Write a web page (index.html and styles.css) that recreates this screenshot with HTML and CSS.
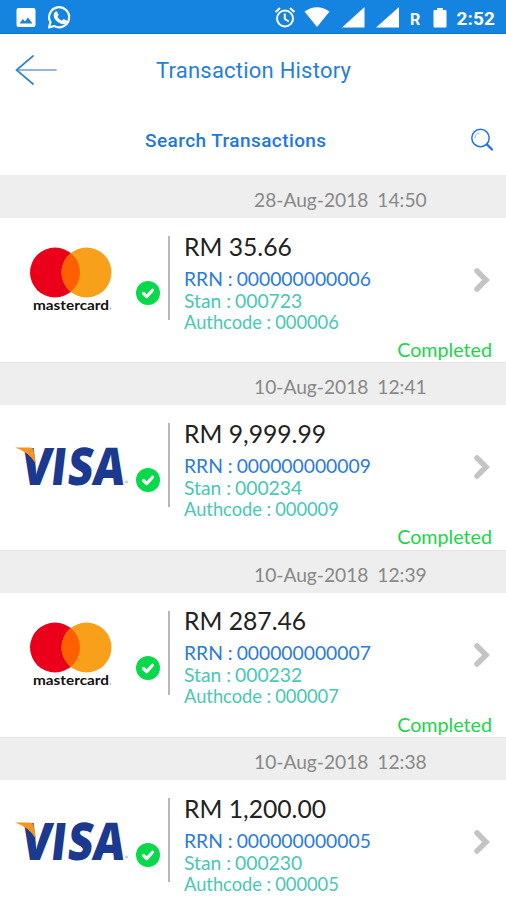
FILE: index.html
```
<!DOCTYPE html>
<html lang="en">
<head>
<meta charset="utf-8">
<title>Transaction History</title>
<link rel="stylesheet" href="styles.css">
</head>
<body>
<svg class="defs" width="0" height="0">
  <symbol id="circles" viewBox="0 0 130 80">
    <circle cx="55" cy="30.500" r="25" fill="#eb001b"/>
    <circle cx="86.500" cy="30.500" r="25" fill="#f9a01b"/>
    <path d="M70.750 11.100a25 25 0 0 1 0 38.800a25 25 0 0 1 0-38.800z" fill="#ff5f00"/>
    <circle cx="110.500" cy="66.800" r=".6" fill="#777"/>
  </symbol>
  <symbol id="flag" viewBox="0 0 130 80">
    <path d="M15 18.500H30Q33 18.500 33.600 21.500L36 35Q29 23 15 18.500z" fill="#f7941d"/>
    <circle cx="126.500" cy="53" r="1" fill="none" stroke="#8791be" stroke-width=".6"/>
  </symbol>
  <symbol id="check" viewBox="0 0 24 24">
    <circle cx="12" cy="12" r="12" fill="#08d94b"/>
    <path d="M7.500 12.500l3.200 3.100 5.800-6.400" fill="none" stroke="#fff" stroke-width="3.200" stroke-linecap="round" stroke-linejoin="round"/>
  </symbol>
  <symbol id="chevron" viewBox="0 0 18 26">
    <path d="M4 4L13 13 4 22" fill="none" stroke="#c4c4c4" stroke-width="5.500" stroke-linecap="round"/>
  </symbol>
</svg>
<header class="status">
  <svg width="506" height="34" viewBox="0 0 506 34" fill="#fff">
    <path fill-rule="evenodd" d="M18.500 8h15a2 2 0 0 1 2 2v15a2 2 0 0 1-2 2h-15a2 2 0 0 1-2-2V10a2 2 0 0 1 2-2zM19.500 23.500h13l-4.500-6-3 4-2.200-2.500z"/>
    <path d="M49 27.500l1.500-5.200a10 10 0 1 1 3.800 3.700z" fill="none" stroke="#fff" stroke-width="2.200" stroke-linejoin="round"/>
    <path d="M55.500 11.500l1.500 0 1.700 3.500-1.300 1.800q1.500 3 4.500 4l1.700-1.800 3.600 1.800q.2 3.200-3.600 3.400-4.700-.4-8-4.200-4-5-.1-8.500z"/>
    <g fill="none" stroke="#fff" stroke-width="2"><circle cx="285" cy="18.500" r="8"/><path d="M284.800 13.500v5.500l4 2.500M275.500 12l4.500-4M290 8l4.500 4"/></g>
    <path d="M304.500 11.500Q317 3 329.500 11.500L317 27z"/>
    <path d="M342 27.500L364.500 7v20.500zM376 27.500L399 7v20.500z"/>
    <path d="M434.500 10h2.500V8h6v2h2.500q1 0 1 1v15.500q0 1-1 1h-11q-1 0-1-1V11q0-1 1-1z"/>
    <text class="roam" x="410" y="25">R</text>
    <text class="clock" x="456.500" y="25.200" textLength="38.500">2:52</text>
  </svg>
</header>
<nav class="top">
  <svg class="back" width="42" height="32" viewBox="0 0 42 32" fill="none" stroke-linecap="round"><path d="M2 15H41" stroke="#6f9dd5" stroke-width="1.700"/><path d="M18 1L1.500 15 18 29" stroke="#3484c9" stroke-width="1.700"/></svg>
  <h1>Transaction History</h1>
</nav>
<div class="search">
  <span>Search Transactions</span>
  <svg width="24" height="24" viewBox="0 0 24 24" fill="none" stroke="#2474e5"><circle cx="10.500" cy="10" r="8.700" stroke-width="1.500"/><path d="M17 16.500l5 5" stroke-width="2.400" stroke-linecap="round"/><path d="M5 10q0-4.500 4.500-5" stroke="#8db8ef"/></svg>
</div>
<main>
  <section>
    <h2>28-Aug-2018 14:50</h2>
    <article>
      <svg class="brand" viewBox="0 0 130 80"><use href="#circles"/><text class="mc-word" x="33" y="67.800" textLength="76" lengthAdjust="spacingAndGlyphs">mastercard</text></svg>
      <svg class="check"><use href="#check"/></svg>
      <div class="info"><p class="amount">RM 35.66</p><p class="rrn"><span>RRN :</span>000000000006</p><p class="stan"><span>Stan :</span>000723</p><p class="auth"><span>Authcode :</span>000006</p></div>
      <svg class="chevron"><use href="#chevron"/></svg>
      <p class="done">Completed</p>
    </article>
  </section>
  <section>
    <h2>10-Aug-2018 12:41</h2>
    <article>
      <svg class="brand" viewBox="0 0 130 80"><text class="visa-word" transform="matrix(.84 0 -.115 1 0 55.800)" x="23.500 59 79 109" y="0">VISA</text><use href="#flag"/></svg>
      <svg class="check"><use href="#check"/></svg>
      <div class="info"><p class="amount">RM 9,999.99</p><p class="rrn"><span>RRN :</span>000000000009</p><p class="stan"><span>Stan :</span>000234</p><p class="auth"><span>Authcode :</span>000009</p></div>
      <svg class="chevron"><use href="#chevron"/></svg>
      <p class="done">Completed</p>
    </article>
  </section>
  <section>
    <h2>10-Aug-2018 12:39</h2>
    <article>
      <svg class="brand" viewBox="0 0 130 80"><use href="#circles"/><text class="mc-word" x="33" y="67.800" textLength="76" lengthAdjust="spacingAndGlyphs">mastercard</text></svg>
      <svg class="check"><use href="#check"/></svg>
      <div class="info"><p class="amount">RM 287.46</p><p class="rrn"><span>RRN :</span>000000000007</p><p class="stan"><span>Stan :</span>000232</p><p class="auth"><span>Authcode :</span>000007</p></div>
      <svg class="chevron"><use href="#chevron"/></svg>
      <p class="done">Completed</p>
    </article>
  </section>
  <section>
    <h2>10-Aug-2018 12:38</h2>
    <article>
      <svg class="brand" viewBox="0 0 130 80"><text class="visa-word" transform="matrix(.84 0 -.115 1 0 55.800)" x="23.500 59 79 109" y="0">VISA</text><use href="#flag"/></svg>
      <svg class="check"><use href="#check"/></svg>
      <div class="info"><p class="amount">RM 1,200.00</p><p class="rrn"><span>RRN :</span>000000000005</p><p class="stan"><span>Stan :</span>000230</p><p class="auth"><span>Authcode :</span>000005</p></div>
      <svg class="chevron"><use href="#chevron"/></svg>
    </article>
  </section>
</main>
</body>
</html>
```
FILE: styles.css
```
* { box-sizing: border-box; }
body { margin: 0; width: 506px; height: 900px; overflow: hidden; background: #fff; font-family: Lato, sans-serif; }
h1, h2, p { margin: 0; font-weight: 400; white-space: nowrap; }
svg { display: block; }
.defs { position: absolute; }
.status { height: 34px; background: #1584e0; border-bottom: 1px solid #0874d4; }
.roam { font: 700 16px Roboto, sans-serif; }
.clock { font: 700 19px Roboto, sans-serif; }
.top { height: 72px; display: flex; align-items: center; padding: 1px 0 0 15px; }
.top h1 { margin-left: 99px; font: 400 22px Roboto, sans-serif; color: #2680d6; letter-spacing: .22px; }
.search { height: 69px; display: flex; align-items: center; justify-content: space-between; padding: 0 12px 0 145px; color: #1e78dc; font: 500 19px Roboto, sans-serif; letter-spacing: .42px; }
.search svg { margin-top: -2px; }
section { height: 187.4px; }
h2 { height: 43px; padding: 7px 0 0 254px; background: #eee; border-top: 1px solid #e4e4e4; color: #888; font-size: 19.200px; line-height: 33px; word-spacing: 4px; }
section:first-child h2 { border-top-color: #eee; }
article { height: 144.400px; display: grid; grid-template-columns: 130px 6px 24px 8px 305px 33px; grid-template-rows: 122px 22.400px; }
.brand { width: 130px; height: 80px; margin-top: 24px; }
.check { width: 24px; height: 24px; margin-top: 63px; grid-column: 3; }
.info { grid-column: 5; height: 84px; margin-top: 18px; border-left: 2px solid #b8b8b8; padding-left: 14px; }
.amount { color: #222; font-size: 24.700px; line-height: 30px; height: 31px; margin-top: -4.300px; }
.rrn, .stan, .auth { display: flex; gap: 4px; font-size: 19.300px; line-height: 22px; height: 22px; }
.rrn { color: #2b7bde; margin-top: 5px; }
.stan, .auth { color: #46c8b3; }
.auth { font-size: 18.300px; height: 21px; line-height: 21px; }
.chevron { grid-column: 6; width: 18px; height: 26px; margin-top: 49px; }
.done { grid-row: 2; grid-column: 1 / -1; padding-right: 14px; text-align: right; color: #20d449; font-size: 19.700px; line-height: 20px; }
.mc-word { font: 700 13.500px Lato, sans-serif; fill: #111; }
.visa-word { font: 800 52px "Open Sans", sans-serif; fill: #1a398f; }
```
